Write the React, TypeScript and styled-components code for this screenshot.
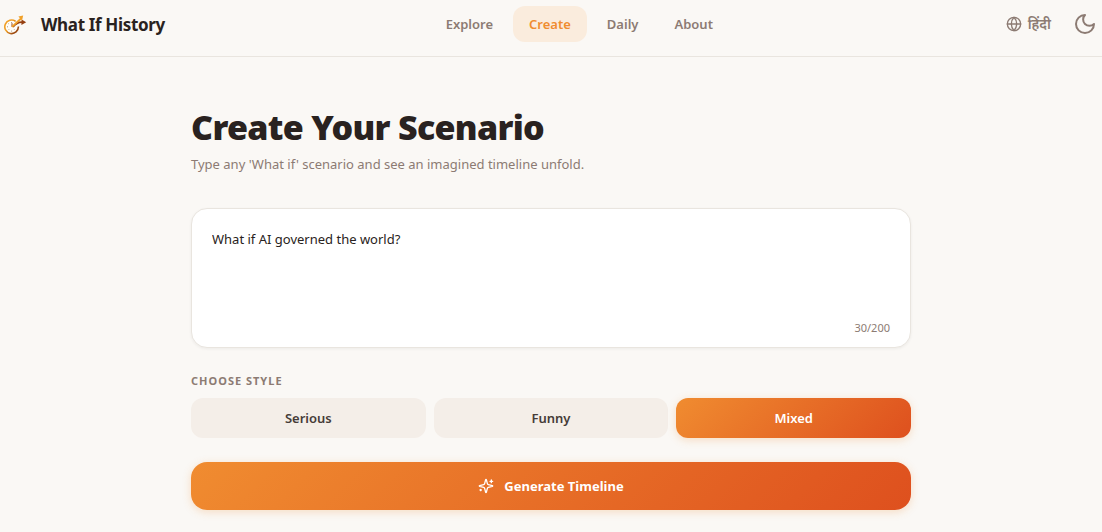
import React, { useState } from "react";
import styled, { createGlobalStyle, css } from "styled-components";
import { Globe } from "lucide-react";

const GlobalStyle = createGlobalStyle`
  *, *::before, *::after { box-sizing: border-box; }
  body {
    margin: 0;
    background: #faf8f5;
    color: #292220;
    font-family: "Noto Sans", "Open Sans", sans-serif;
    font-size: 13px;
    line-height: 20px;
  }
  button, textarea { font: inherit; }
`;

const gradient = "linear-gradient(135deg, #f08c30, #de501e)";

const Header = styled.header`
  display: flex;
  justify-content: space-between;
  align-items: center;
  padding: 6px 5px 14px 4px;
  border-bottom: 1px solid #e9e5df;
`;

const Brand = styled.a`
  display: flex;
  align-items: center;
  gap: 14px;
  padding-top: 2px;
  color: inherit;
  text-decoration: none;
  font-size: 17px;
  line-height: 28px;
  font-weight: 700;
  letter-spacing: -0.02em;
`;

const Nav = styled.nav`
  display: flex;
  gap: 4px;
`;

const NavLink = styled.a<{ $active?: boolean }>`
  padding: 8px 16px;
  border-radius: 12px;
  font-weight: 600;
  text-decoration: none;
  color: ${(p) => (p.$active ? "#f08c30" : "#8c7b73")};
  background: ${(p) => (p.$active ? "#faecdd" : "transparent")};
`;

const Tools = styled.div`
  display: flex;
  align-items: center;
  gap: 10px;
`;

const ToolButton = styled.button`
  display: flex;
  align-items: center;
  gap: 6px;
  padding: 0 0 0 12px;
  border: 0;
  background: none;
  color: #8c7b73;
  font-size: 14px;
  font-weight: 600;
  cursor: pointer;
`;

const Main = styled.main`
  width: 100%;
  max-width: 752px;
  margin: 0 auto;
  padding: 48px 16px 22px;
`;

const Title = styled.h1`
  margin: 0 0 5px;
  font-size: 34px;
  line-height: 44px;
  font-weight: 900;
  letter-spacing: -0.02em;
`;

const Lead = styled.p`
  margin: 0;
  color: #8c7b73;
`;

const Card = styled.div`
  display: flex;
  flex-direction: column;
  margin-top: 34px;
  padding: 20px 20px 11px;
  border: 1px solid #e9e5df;
  border-radius: 16px;
  background: #fff;
  box-shadow: 0 1px 3px rgba(41, 34, 32, 0.06);
`;

const Prompt = styled.textarea`
  display: block;
  height: 88px;
  padding: 0;
  border: 0;
  outline: 0;
  resize: none;
  background: none;
  color: inherit;
`;

const Counter = styled.span`
  align-self: flex-end;
  margin-top: 3px;
  font-size: 11px;
  line-height: 16px;
  color: #8c7b73;
`;

const StyleGroup = styled.fieldset`
  margin: 24px 0 0;
  padding: 0;
  border: 0;
`;

const GroupLabel = styled.legend`
  padding: 0 0 8px;
  font-size: 11px;
  line-height: 18px;
  font-weight: 700;
  letter-spacing: 1px;
  text-transform: uppercase;
  color: #8c7b73;
`;

const Options = styled.div`
  display: grid;
  grid-template-columns: repeat(3, 1fr);
  gap: 8px;
`;

const raised = css`
  background: ${gradient};
  color: #fff;
  box-shadow: 0 2px 8px rgba(240, 140, 48, 0.25);
`;

const Option = styled.button<{ $selected: boolean }>`
  height: 40px;
  border: 0;
  border-radius: 12px;
  background: #f4eee8;
  color: #463c38;
  font-weight: 600;
  cursor: pointer;
  ${(p) => p.$selected && raised}
`;

const Generate = styled.button`
  display: flex;
  align-items: center;
  justify-content: center;
  gap: 10px;
  width: 100%;
  height: 48px;
  margin-top: 24px;
  border: 0;
  border-radius: 16px;
  font-weight: 700;
  cursor: pointer;
  ${raised}
`;

const Logo = () => (
  <svg width="23" height="20" viewBox="0 0 23 20" fill="none" aria-hidden="true">
    <defs>
      <linearGradient id="ring" x1="0" y1="6" x2="15" y2="16" gradientUnits="userSpaceOnUse">
        <stop offset="0.4" stopColor="#f0a028" />
        <stop offset="0.8" stopColor="#9c4a12" />
      </linearGradient>
    </defs>
    <circle cx="7.6" cy="11.8" r="6.6" fill="#fffdf8" />
    <path d="M11.6 6.3A6.8 6.8 0 1 0 14.4 11.6" stroke="url(#ring)" strokeWidth="1.6" />
    <path d="M7.6 7v1M3 11.8h1M7.6 15.6v1M4.4 8.6l.6.6M4.4 15l.6-.6M10.8 15l-.6-.6" stroke="#8a6a50" strokeWidth="0.7" />
    <path d="M9 12c3-3.800 5.500-5 9-4.900" stroke="#963f10" strokeWidth="1.6" />
    <path d="m17.600 4.400 4.600 2.800-4.800 2.700z" fill="#963f10" />
    <path d="M8 11.800V8.200" stroke="#963f10" strokeWidth="1" />
    <path d="M8 11.800l9-8.300" stroke="#f0a028" strokeWidth="1.800" />
    <path d="m14.400 1.500 4.800-.9-1.200 5z" fill="#f0a028" />
  </svg>
);

const Moon = () => (
  <svg width="24" height="24" viewBox="0 0 24 24" fill="none" stroke="currentColor" strokeWidth="2" strokeLinecap="round" strokeLinejoin="round" aria-hidden="true">
    <path d="M12 3a6 6 0 0 0 9 9 9 9 0 1 1-9-9Z" />
  </svg>
);

const Sparkles = () => (
  <svg width="16" height="16" viewBox="0 0 24 24" fill="none" stroke="currentColor" strokeWidth="2" strokeLinecap="round" strokeLinejoin="round" aria-hidden="true">
    <path d="M9.937 15.5A2 2 0 0 0 8.5 14.063l-6.135-1.582a.5.5 0 0 1 0-.962L8.5 9.936A2 2 0 0 0 9.937 8.5l1.582-6.135a.5.5 0 0 1 .963 0L14.063 8.5A2 2 0 0 0 15.5 9.937l6.135 1.581a.5.5 0 0 1 0 .964L15.5 14.063a2 2 0 0 0-1.437 1.437l-1.582 6.135a.5.5 0 0 1-.963 0z" />
    <path d="M20 3v4M22 5h-4M4 17v2M5 18H3" />
  </svg>
);

const LIMIT = 200;
const styles = ["Serious", "Funny", "Mixed"];

export default function App() {
  const [text, setText] = useState("What if AI governed the world?");
  const [selected, setSelected] = useState("Mixed");
  return (
    <>
      <GlobalStyle />
      <Header>
        <Brand href="#"><Logo />What If History</Brand>
        <Nav>
          <NavLink href="#explore">Explore</NavLink>
          <NavLink href="#create" $active aria-current="page">Create</NavLink>
          <NavLink href="#daily">Daily</NavLink>
          <NavLink href="#about">About</NavLink>
        </Nav>
        <Tools>
          <ToolButton type="button" lang="hi"><Globe size={16} />हिंदी</ToolButton>
          <ToolButton type="button" aria-label="Toggle theme"><Moon /></ToolButton>
        </Tools>
      </Header>
      <Main>
        <Title>Create Your Scenario</Title>
        <Lead>Type any 'What if' scenario and see an imagined timeline unfold.</Lead>
        <Card>
          <Prompt aria-label="Scenario" maxLength={LIMIT} value={text} onChange={(e) => setText(e.target.value)} />
          <Counter>{text.length}/{LIMIT}</Counter>
        </Card>
        <StyleGroup>
          <GroupLabel>Choose style</GroupLabel>
          <Options>
            {styles.map((name) => (
              <Option key={name} type="button" $selected={name === selected} aria-pressed={name === selected} onClick={() => setSelected(name)}>
                {name}
              </Option>
            ))}
          </Options>
        </StyleGroup>
        <Generate type="button"><Sparkles />Generate Timeline</Generate>
      </Main>
    </>
  );
}
